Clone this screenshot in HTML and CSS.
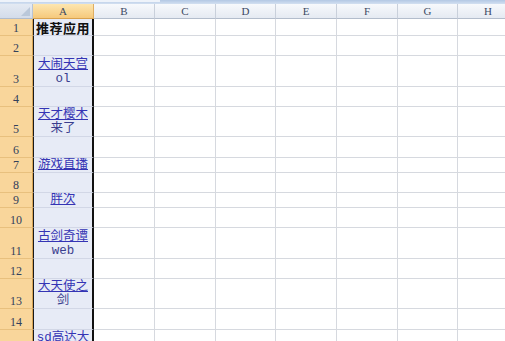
FILE: index.html
```html
<html>
    <head>
        <title>Sheet1</title>
        <link rel="stylesheet" href="styles.css">
    </head>
    <body>
        <div class="topbar"><div class="tab"></div></div>
        <div class="sheet">
            <div class="row head">
                <div class="corner"><div class="tri"></div></div>
                <div class="col sel">A</div>
                <div class="col">B</div>
                <div class="col">C</div>
                <div class="col">D</div>
                <div class="col">E</div>
                <div class="col">F</div>
                <div class="col">G</div>
                <div class="col">H</div>
            </div>

            <div class="row h17">
                <div class="num">1</div>
                <div class="cell a"><b class="title">推荐应用</b></div>
                <div class="cell"></div><div class="cell"></div><div class="cell"></div><div class="cell"></div><div class="cell"></div><div class="cell"></div><div class="cell"></div>
            </div>
            <div class="row h20">
                <div class="num">2</div>
                <div class="cell a"></div>
                <div class="cell"></div><div class="cell"></div><div class="cell"></div><div class="cell"></div><div class="cell"></div><div class="cell"></div><div class="cell"></div>
            </div>
            <div class="row h31">
                <div class="num">3</div>
                <div class="cell a"><a class="link" href="#">大闹天宫</a><span class="more">ol</span></div>
                <div class="cell"></div><div class="cell"></div><div class="cell"></div><div class="cell"></div><div class="cell"></div><div class="cell"></div><div class="cell"></div>
            </div>
            <div class="row h20">
                <div class="num">4</div>
                <div class="cell a"></div>
                <div class="cell"></div><div class="cell"></div><div class="cell"></div><div class="cell"></div><div class="cell"></div><div class="cell"></div><div class="cell"></div>
            </div>
            <div class="row h30">
                <div class="num">5</div>
                <div class="cell a"><a class="link" href="#">天才樱木</a><span class="more">来了</span></div>
                <div class="cell"></div><div class="cell"></div><div class="cell"></div><div class="cell"></div><div class="cell"></div><div class="cell"></div><div class="cell"></div>
            </div>
            <div class="row h21">
                <div class="num">6</div>
                <div class="cell a"></div>
                <div class="cell"></div><div class="cell"></div><div class="cell"></div><div class="cell"></div><div class="cell"></div><div class="cell"></div><div class="cell"></div>
            </div>
            <div class="row h15">
                <div class="num">7</div>
                <div class="cell a"><a class="link" href="#">游戏直播</a></div>
                <div class="cell"></div><div class="cell"></div><div class="cell"></div><div class="cell"></div><div class="cell"></div><div class="cell"></div><div class="cell"></div>
            </div>
            <div class="row h20">
                <div class="num">8</div>
                <div class="cell a"></div>
                <div class="cell"></div><div class="cell"></div><div class="cell"></div><div class="cell"></div><div class="cell"></div><div class="cell"></div><div class="cell"></div>
            </div>
            <div class="row h15">
                <div class="num">9</div>
                <div class="cell a"><a class="link" href="#">胖次</a></div>
                <div class="cell"></div><div class="cell"></div><div class="cell"></div><div class="cell"></div><div class="cell"></div><div class="cell"></div><div class="cell"></div>
            </div>
            <div class="row h20">
                <div class="num">10</div>
                <div class="cell a"></div>
                <div class="cell"></div><div class="cell"></div><div class="cell"></div><div class="cell"></div><div class="cell"></div><div class="cell"></div><div class="cell"></div>
            </div>
            <div class="row h31">
                <div class="num">11</div>
                <div class="cell a"><a class="link" href="#">古剑奇谭</a><span class="more">web</span></div>
                <div class="cell"></div><div class="cell"></div><div class="cell"></div><div class="cell"></div><div class="cell"></div><div class="cell"></div><div class="cell"></div>
            </div>
            <div class="row h20">
                <div class="num">12</div>
                <div class="cell a"></div>
                <div class="cell"></div><div class="cell"></div><div class="cell"></div><div class="cell"></div><div class="cell"></div><div class="cell"></div><div class="cell"></div>
            </div>
            <div class="row h30">
                <div class="num">13</div>
                <div class="cell a"><a class="link" href="#">大天使之</a><span class="more">剑</span></div>
                <div class="cell"></div><div class="cell"></div><div class="cell"></div><div class="cell"></div><div class="cell"></div><div class="cell"></div><div class="cell"></div>
            </div>
            <div class="row h21">
                <div class="num">14</div>
                <div class="cell a"></div>
                <div class="cell"></div><div class="cell"></div><div class="cell"></div><div class="cell"></div><div class="cell"></div><div class="cell"></div><div class="cell"></div>
            </div>
            <div class="row h30">
                <div class="num">15</div>
                <div class="cell a"><a class="link" href="#">sd高达大</a><span class="more">作战</span></div>
                <div class="cell"></div><div class="cell"></div><div class="cell"></div><div class="cell"></div><div class="cell"></div><div class="cell"></div><div class="cell"></div>
            </div>
        </div>
    </body>
</html>
```

FILE: styles.css
```css
body{
    margin: 0;
    width: 505px;
    height: 341px;
    overflow: hidden;
    background: #ffffff;
}
.topbar{
    height: 4px;
    background: linear-gradient(#b3c8e4, #d3e0f1);
}
.tab{
    width: 160px;
    height: 2px;
    background: #eef3fa;
}
.sheet{
    width: 519px;
}
.row{
    display: grid;
    grid-template-columns: 33px 61px 61px 61px 60px 61px 61px 60px 61px;
}
.head{ height: 15px; }
.h15{ height: 15px; }
.h17{ height: 17px; }
.h20{ height: 20px; }
.h21{ height: 21px; }
.h30{ height: 30px; }
.h31{ height: 31px; }

.corner{
    position: relative;
    background: linear-gradient(#e4eaf3, #d3dcea);
    border-right: 1px solid #b9c4d4;
    border-bottom: 1px solid #b0bccd;
    box-sizing: border-box;
}
.tri{
    position: absolute;
    right: 2px;
    bottom: 2px;
    width: 0;
    height: 0;
    border-left: 9px solid transparent;
    border-bottom: 9px solid #bac8da;
}
.col{
    box-sizing: border-box;
    background: linear-gradient(#f7f9fc, #e5eaf2);
    border-right: 1px solid #c9d0db;
    border-bottom: 1px solid #b3bdcc;
    text-align: center;
    font-family: "Liberation Serif", serif;
    font-size: 11px;
    line-height: 14px;
    color: #3c4a63;
}
.col.sel{
    background: linear-gradient(#fde6b0, #f6c97c);
    border-right: 1px solid #dfae62;
    border-bottom: 1px solid #d9a24e;
}
.num{
    box-sizing: border-box;
    background: #f9d69b;
    border-right: 1px solid #d9a555;
    border-bottom: 1px solid #e8c07e;
    display: flex;
    align-items: flex-end;
    justify-content: center;
    font-family: "Liberation Serif", serif;
    font-size: 12px;
    line-height: 14px;
    color: #33415b;
}
.cell{
    box-sizing: border-box;
    border-right: 1px solid #d6d9df;
    border-bottom: 1px solid #d6d9df;
}
.cell.a{
    background: #e7ebf6;
    border-left: 1px solid #1a1a1a;
    border-right: 2px solid #111111;
    border-bottom: 1px solid #d2d7e6;
    display: flex;
    flex-direction: column;
    justify-content: flex-end;
    align-items: center;
    overflow: hidden;
    font-family: "Liberation Mono", "Noto Sans CJK SC", monospace;
    font-size: 12.5px;
    line-height: 14px;
}
.title{
    font-family: "Noto Sans CJK SC", sans-serif;
    font-size: 13px;
    letter-spacing: 0.5px;
    color: #111111;
    line-height: 15px;
}
.link{
    color: #3434b4;
    text-decoration: underline;
    white-space: nowrap;
}
.more{
    color: #3a3d8e;
    white-space: nowrap;
}
```
